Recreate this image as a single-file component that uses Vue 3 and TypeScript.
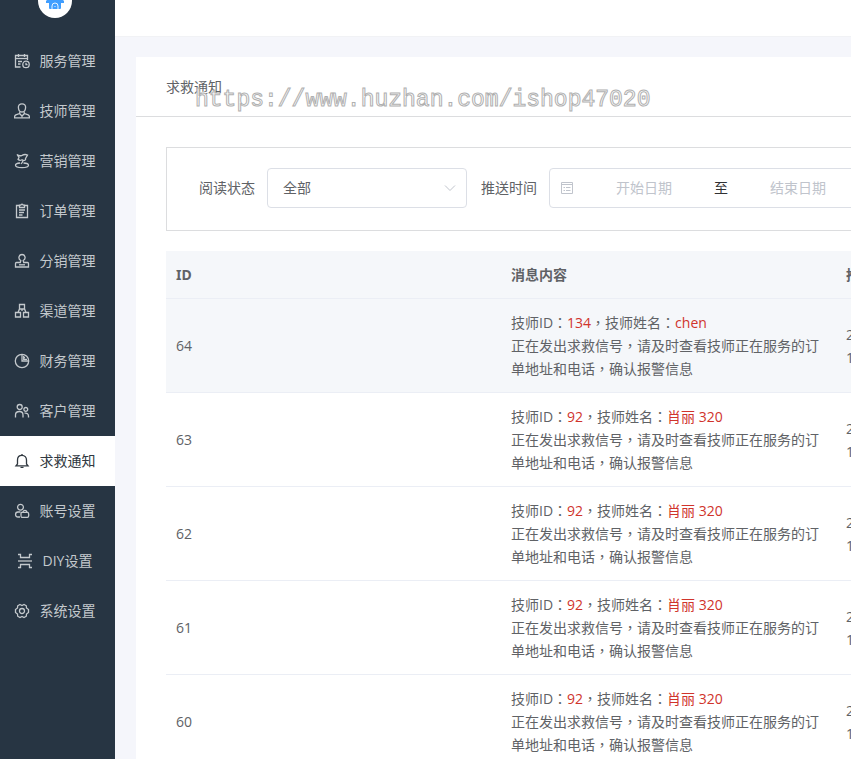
<script setup lang="ts">
import { ref } from 'vue'

interface MenuItem {
  label: string
  icon: string
}

interface Notice {
  id: number
  techId: number
  techName: string
  date: string
  time: string
}

const menu: MenuItem[] = [
  { label: '服务管理', icon: 'service' },
  { label: '技师管理', icon: 'technician' },
  { label: '营销管理', icon: 'marketing' },
  { label: '订单管理', icon: 'order' },
  { label: '分销管理', icon: 'distribution' },
  { label: '渠道管理', icon: 'channel' },
  { label: '财务管理', icon: 'finance' },
  { label: '客户管理', icon: 'customer' },
  { label: '求救通知', icon: 'bell' },
  { label: '账号设置', icon: 'account' },
  { label: 'DIY设置', icon: 'diy' },
  { label: '系统设置', icon: 'gear' },
]

const icons: Record<string, string[]> = {
  service: ['M6.500 14H1.500V2.500H13.500V7', 'M1.500 5.500H13.500', 'M4.500 1V4M10.500 1V4', 'M4 8.500H8M4 11H6.500', 'M12 8.200A3.200 3.200 0 1 1 12 14.600A3.200 3.200 0 1 1 12 8.200Z', 'M12 9.800V11.600H13.500'],
  technician: ['M8 .8C10.500 .8 11.800 2.500 11.600 4.700C11.400 7.200 10 9 8 9C6 9 4.600 7.200 4.400 4.700C4.200 2.500 5.500 .8 8 .8Z', 'M6 9L5.500 10.500L1.800 11.800C.8 12.300 .5 13 .5 14.800H15.500C15.500 13 15.200 12.300 14.200 11.800L10.500 10.500L10 9', 'M5.500 10.500L8 13L10.500 10.500M8 13V14.500'],
  marketing: ['M3 1.500C5 3.200 6.500 3 8 2.300C10 1.300 11.500 1.200 13.500 2L11.500 5.500C12.200 7.500 9.500 8 8 6.700C6.300 7.800 4.800 7.200 4 6.300L5 4.500Z', 'M9 7.500C9 9 8 9.500 7 11', 'M6 10C3 10.300 1.500 11 1.500 12.300C1.500 13.700 4 14.700 8 14.700C12 14.700 14.500 13.700 14.500 12.300C14.500 10.900 12.500 10 9.500 10'],
  order: ['M5.500 2.500H2.500V14.500H13.500V2.500H10.500', 'M5.500 4.500V2.200H6.800C7 .8 9 .8 9.200 2.200H10.500V4.500Z', 'M5 7H11M5 9.500H10M5 12H8.500'],
  distribution: ['M6.300 9.500L6.800 7.500C3.800 6 4.600 1.500 8 1.500C11.400 1.500 12.200 6 9.200 7.500L9.700 9.500H13.500C14.200 9.500 14.500 10 14.500 10.500V14H1.500V10.500C1.500 10 1.800 9.500 2.500 9.500Z', 'M5 11.800H11'],
  channel: ['M5.500 1.500H10.500V6H5.500Z', 'M1.500 9.500H6.500V14H1.500Z', 'M9.500 9.500H14.500V14H9.500Z', 'M8 6V8M4 9.500L5.500 6M12 9.500L10.500 6'],
  finance: ['M8 1.300A6.700 6.700 0 1 0 14.700 8A6.700 6.700 0 0 0 8 1.300Z', 'M8 1.300V8H14.700', 'M9.700 3V6.300H13M9.700 4.700H11'],
  customer: ['M5.700 1.500A2.500 2.500 0 1 1 5.700 6.500A2.500 2.500 0 1 1 5.700 1.500Z', 'M1.500 14.500V12C1.500 9.500 3 8.500 5.500 8.500C8 8.500 9 9.700 9 12V14.500', 'M11.800 4.500A1.900 1.900 0 1 1 11.800 8.300A1.900 1.900 0 1 1 11.800 4.500Z', 'M10.500 10.200C13.200 9.700 14.500 11 14.500 13V14.500'],
  bell: ['M2 12.800H14L12.500 11V7C12.500 4.200 10.700 2.300 8 2.300C5.300 2.300 3.500 4.200 3.500 7V11Z', 'M8 1V2.300M6.500 14.300H9.500'],
  account: ['M6.500 1.300A2.900 2.900 0 1 1 6.500 7.100A2.900 2.900 0 1 1 6.500 1.300Z', 'M6.500 9H4C.8 9 .7 14 4 14H6', 'M7.500 9.300H13.500C15 9.300 15.300 14.300 13.500 14.300H7.500C6.800 14.300 6.800 9.300 7.500 9.300Z', 'M9 9.300C9 6.800 12.800 6.800 12.800 9.300'],
  diy: ['M1 1.500H3.500V4.500H12.500V1.500H15', 'M1 8H15', 'M1 14.500H3.500V11.500H12.500V14.500H15'],
  gear: ['M6 1.500L8 2.500L10 1.500L12.300 2.800L12.500 5L14.500 6.500V9.500L12.500 11L12.300 13.200L10 14.500L8 13.500L6 14.500L3.700 13.200L3.500 11L1.500 9.500V6.500L3.500 5L3.700 2.800Z', 'M8 5.500A2.500 2.500 0 1 1 8 10.500A2.500 2.500 0 1 1 8 5.500Z'],
}

const active = ref('求救通知')
const status = ref('全部')
const startDate = ref('')
const endDate = ref('')

const notices: Notice[] = [
  { id: 64, techId: 134, techName: 'chen', date: '2022-06-18', time: '16:20:35' },
  { id: 63, techId: 92, techName: '肖丽 320', date: '2022-06-17', time: '15:42:10' },
  { id: 62, techId: 92, techName: '肖丽 320', date: '2022-06-17', time: '15:41:52' },
  { id: 61, techId: 92, techName: '肖丽 320', date: '2022-06-17', time: '15:40:26' },
  { id: 60, techId: 92, techName: '肖丽 320', date: '2022-06-17', time: '15:38:07' },
]
</script>

<template>
  <div class="layout">
    <aside class="sidebar">
      <div class="brand">
        <span class="logo">
          <svg viewBox="0 0 34 34" width="34" height="34" aria-hidden="true">
            <path d="M17 8L26 17V19H23V24Q23 25 22 25H12Q11 25 11 24V19H8V17Z" fill="#409eff" />
            <path d="M14 25V22Q14 19 17 19Q20 19 20 22V25M17 22V23" fill="none" stroke="#e8f4ff" stroke-width="1" />
          </svg>
        </span>
      </div>
      <nav class="menu">
        <a
          v-for="item in menu"
          :key="item.label"
          href="#"
          class="menu-item"
          :class="{ active: item.label === active }"
          @click.prevent="active = item.label"
        >
          <svg class="menu-icon" viewBox="0 0 16 16" aria-hidden="true">
            <path v-for="d in icons[item.icon]" :key="d" :d="d" />
          </svg>
          <span class="menu-label">{{ item.label }}</span>
        </a>
      </nav>
    </aside>

    <div class="content">
      <header class="topbar"></header>
      <main class="page">
        <section class="card">
          <div class="card-head">
            <h1>求救通知</h1>
            <span class="watermark">https://www.huzhan.com/ishop47020</span>
          </div>
          <div class="card-body">
            <form class="filters" @submit.prevent>
              <div class="field">
                <label for="status">阅读状态</label>
                <div class="select">
                  <select id="status" v-model="status">
                    <option>全部</option>
                    <option>未读</option>
                    <option>已读</option>
                  </select>
                  <svg class="chevron" viewBox="0 0 14 14" aria-hidden="true">
                    <path d="M2 4.500L7 9.500L12 4.500" />
                  </svg>
                </div>
              </div>
              <div class="field">
                <label for="start">推送时间</label>
                <div class="range">
                  <svg class="calendar" viewBox="0 0 14 14" aria-hidden="true">
                    <path d="M1.500 1.500H12.500V12.500H1.500ZM1.500 3.500H12.500M3.500 6.500H5M6 6.500H10.500M3.500 9.500H5M6 9.500H10.500" />
                  </svg>
                  <input id="start" v-model="startDate" type="text" placeholder="开始日期" />
                  <span class="to">至</span>
                  <input v-model="endDate" type="text" placeholder="结束日期" aria-label="结束日期" />
                </div>
              </div>
            </form>

            <table class="table">
              <thead>
                <tr>
                  <th scope="col">ID</th>
                  <th scope="col">消息内容</th>
                  <th scope="col">推送时间</th>
                </tr>
              </thead>
              <tbody>
                <tr v-for="(row, index) in notices" :key="row.id" :class="{ hover: index === 0 }">
                  <td>{{ row.id }}</td>
                  <td>
                    <div>技师ID<span class="punct">：</span><em>{{ row.techId }}</em><span class="punct">，</span>技师姓名<span class="punct">：</span><em>{{ row.techName }}</em></div>
                    <div>正在发出求救信号<span class="punct">，</span>请及时查看技师正在服务的订单地址和电话<span class="punct">，</span>确认报警信息</div>
                  </td>
                  <td>
                    <div>{{ row.date }}</div>
                    <div>{{ row.time }}</div>
                  </td>
                </tr>
              </tbody>
            </table>
          </div>
        </section>
      </main>
    </div>
  </div>
</template>

<style>
body {
  margin: 0;
}
</style>

<style scoped>
* {
  box-sizing: border-box;
}

.layout {
  display: flex;
  height: 100vh;
  overflow: hidden;
  background: #f5f6fb;
  color: #606266;
  font-family: "Open Sans", "Noto Sans CJK SC", sans-serif;
  font-size: 14px;
  line-height: 23px;
}

.sidebar {
  flex: none;
  width: 115px;
  background: #273543;
}

.brand {
  display: flex;
  align-items: flex-end;
  justify-content: center;
  height: 36px;
  padding: 0 5px 18px 0;
  overflow: hidden;
}

.logo {
  flex: none;
  width: 34px;
  height: 34px;
  border-radius: 50%;
  background: #fff;
}

.logo svg {
  display: block;
}

.menu-item {
  display: flex;
  align-items: center;
  justify-content: center;
  gap: 10px;
  height: 50px;
  padding-right: 6px;
  color: #c4c9cd;
  text-decoration: none;
}

.menu-item.active {
  background: #fff;
  color: #303840;
}

.menu-label {
  padding-bottom: 2px;
}

.menu-icon {
  flex: none;
  width: 16px;
  height: 16px;
  fill: none;
  stroke: currentColor;
  stroke-width: 1.3;
}

.content {
  flex: 1;
  min-width: 0;
  overflow: hidden;
}

.topbar {
  height: 37px;
  border-bottom: 1px solid #f1f2f5;
  background: #fff;
}

.page {
  display: flex;
  padding: 20px 20px 20px 21px;
}

.card {
  flex: 1 0 auto;
  background: #fff;
}

.card-head {
  position: relative;
  padding: 18px 30px;
  border-bottom: 1px solid #dcdddf;
}

.card-head h1 {
  margin: 0;
  font-size: 14px;
  font-weight: 400;
}

.watermark {
  position: absolute;
  top: 29px;
  left: 59px;
  color: #fff;
  font-family: "Liberation Mono", monospace;
  font-size: 23px;
  line-height: 28px;
  -webkit-text-stroke: 1px #b0b0b0;
  pointer-events: none;
}

.card-body {
  padding: 30px;
}

.filters {
  display: flex;
  gap: 14px;
  padding: 20px 32px 22px;
  border: 1px solid #dcdddf;
}

.field {
  display: flex;
  align-items: center;
  gap: 12px;
}

.field label {
  padding-bottom: 2px;
  white-space: nowrap;
}

.select {
  position: relative;
  width: 200px;
}

.select select {
  display: block;
  width: 100%;
  height: 40px;
  padding: 0 30px 2px 15px;
  border: 1px solid #dcdfe6;
  border-radius: 4px;
  appearance: none;
  background: #fff;
  color: #606266;
  font: inherit;
}

.chevron {
  position: absolute;
  top: 13px;
  right: 10px;
  width: 14px;
  height: 14px;
  fill: none;
  stroke: #c0c4cc;
  pointer-events: none;
}

.range {
  display: flex;
  align-items: center;
  width: 350px;
  height: 40px;
  padding: 0 10px;
  border: 1px solid #dcdfe6;
  border-radius: 4px;
}

.calendar {
  flex: none;
  width: 14px;
  height: 14px;
  margin-right: 3px;
  fill: none;
  stroke: #c0c4cc;
}

.range input {
  width: 134px;
  padding: 0 0 2px;
  border: 0;
  outline: 0;
  background: none;
  color: #606266;
  font: inherit;
  text-align: center;
}

.range input::placeholder {
  color: #c0c4cc;
}

.to {
  width: 20px;
  padding-bottom: 2px;
  color: #303133;
  text-align: center;
}

.table {
  width: 1005px;
  margin-top: 20px;
  border-collapse: separate;
  border-spacing: 0;
  table-layout: fixed;
}

.table th,
.table td {
  padding: 12px 10px;
  border-bottom: 1px solid #ebeef5;
  text-align: left;
}

.table th {
  background: #f5f7fa;
  font-family: "Noto Sans", "Noto Sans CJK SC", sans-serif;
  font-weight: 700;
}

.table .hover td {
  background: #f5f7fa;
}

.table em {
  color: #d0342c;
  font-style: normal;
}

.punct {
  font-family: "Noto Sans CJK TC", sans-serif;
  line-height: 1;
}
</style>
